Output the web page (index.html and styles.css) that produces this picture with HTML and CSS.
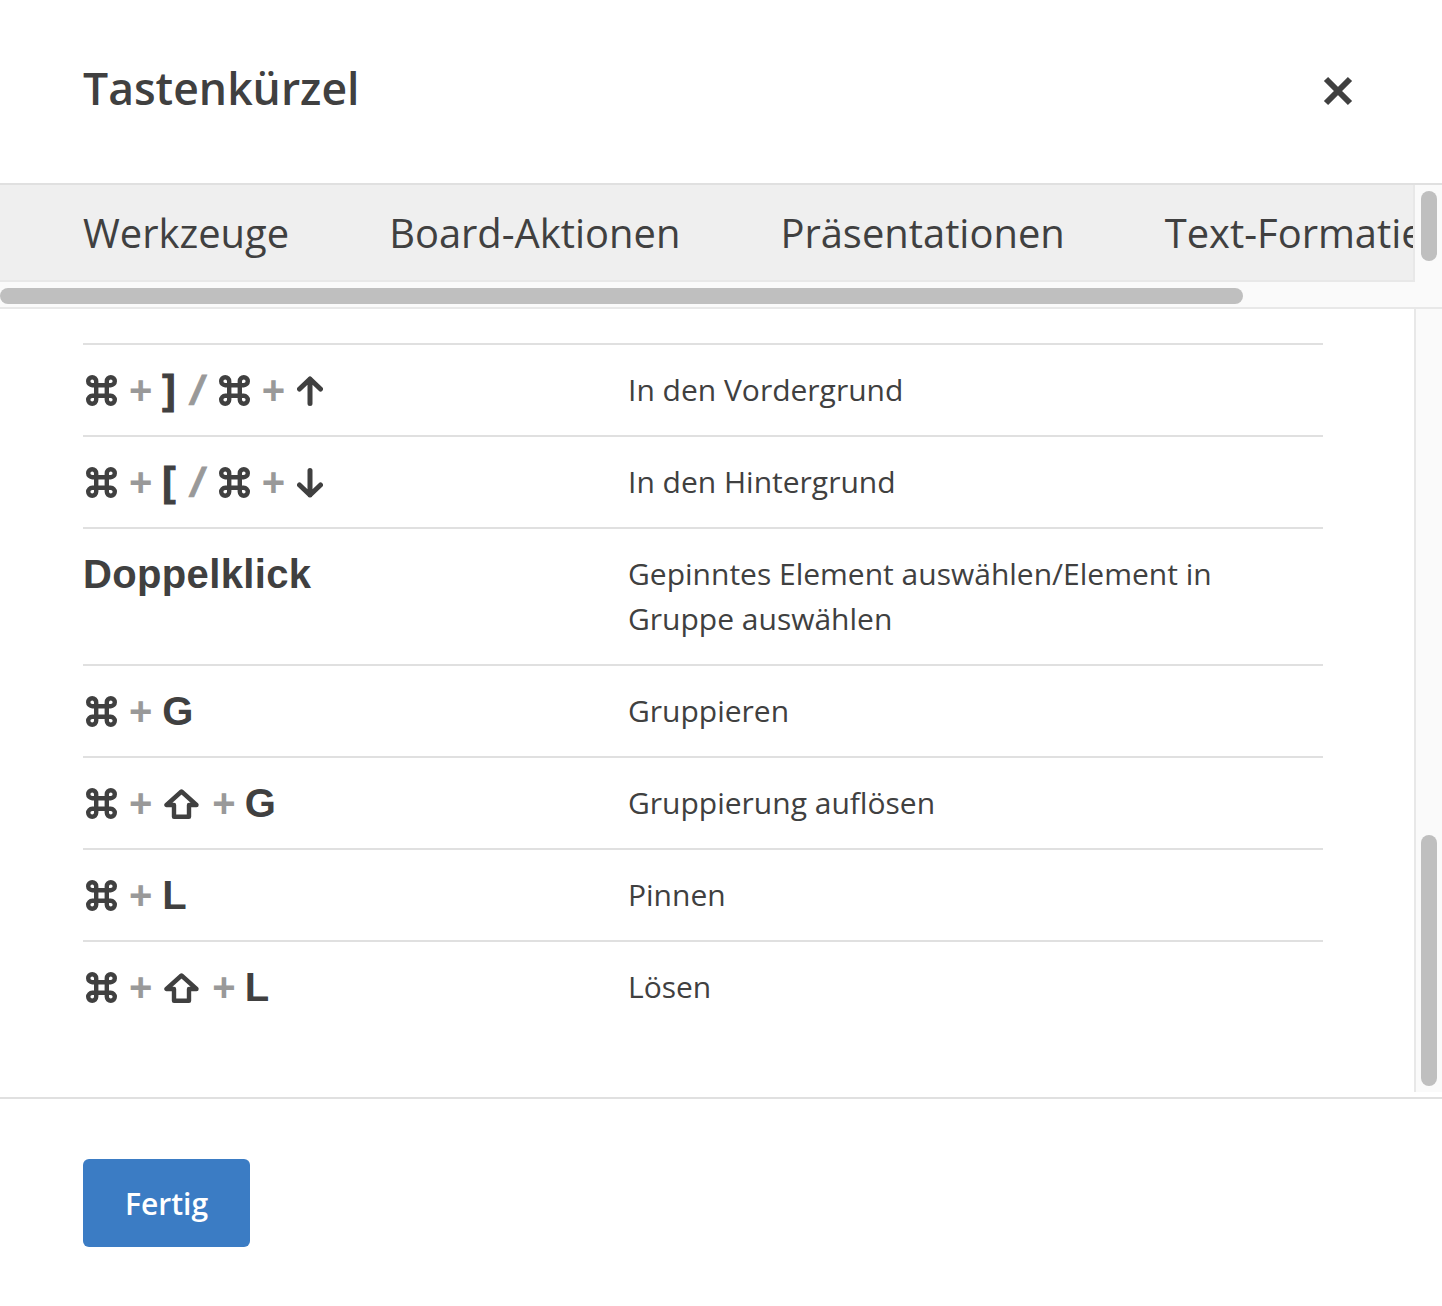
FILE: index.html
```html
<!DOCTYPE html>
<html lang="de">
<head>
    <meta charset="UTF-8">
    <title>Tastenkürzel</title>
    <link rel="stylesheet" href="styles.css">
</head>
<body>
    <svg class="defs" width="0" height="0">
        <symbol id="cmd" viewBox="0 0 31 31">
            <path d="M10.200 10.200V6.200a4 4 0 1 0-4 4H24.800a4 4 0 1 0-4-4V24.800a4 4 0 1 0 4-4H6.200a4 4 0 1 0 4 4Z" fill="none" stroke="currentColor" stroke-width="4.400"/>
        </symbol>
        <symbol id="up" viewBox="0 0 26 30">
            <path d="M13 27.500V3M2.500 13 13 3l10.500 10" fill="none" stroke="currentColor" stroke-width="5" stroke-linecap="round" stroke-linejoin="round"/>
        </symbol>
        <symbol id="down" viewBox="0 0 26 30">
            <path d="M13 2.500V27M2.500 17 13 27l10.500-10" fill="none" stroke="currentColor" stroke-width="5" stroke-linecap="round" stroke-linejoin="round"/>
        </symbol>
        <symbol id="shift" viewBox="0 0 35 30">
            <path d="M17.500 2.500 2.500 16H10V27.800H25V16H32.500Z" fill="none" stroke="currentColor" stroke-width="4.400" stroke-linejoin="round"/>
        </symbol>
    </svg>

    <div class="dialog">
        <header class="dialog-header">
            <h1 class="dialog-title">Tastenkürzel</h1>
            <svg class="close-icon" viewBox="0 0 30 30"><path d="M3 3 27 27M27 3 3 27" stroke="currentColor" stroke-width="6"/></svg>
        </header>

        <div class="tabs-wrap">
            <div class="tabs-scroll">
                <nav class="tabs">
                    <span class="tab">Werkzeuge</span>
                    <span class="tab">Board-Aktionen</span>
                    <span class="tab">Präsentationen</span>
                    <span class="tab">Text-Formatierung</span>
                </nav>
                <div class="hbar"><div class="hbar-thumb"></div></div>
            </div>
            <div class="vbar vbar-tabs"><div class="vbar-thumb"></div></div>
        </div>

        <div class="dialog-body">
            <div class="shortcuts">
                <div class="row">
                    <div class="keys">
                        <svg class="ic-cmd"><use href="#cmd"/></svg><span class="sep">+</span><span class="key bracket">]</span><span class="sep slash">/</span><svg class="ic-cmd"><use href="#cmd"/></svg><span class="sep">+</span><svg class="ic-arrow"><use href="#up"/></svg>
                    </div>
                    <div class="desc">In den Vordergrund</div>
                </div>
                <div class="row">
                    <div class="keys">
                        <svg class="ic-cmd"><use href="#cmd"/></svg><span class="sep">+</span><span class="key bracket">[</span><span class="sep slash">/</span><svg class="ic-cmd"><use href="#cmd"/></svg><span class="sep">+</span><svg class="ic-arrow"><use href="#down"/></svg>
                    </div>
                    <div class="desc">In den Hintergrund</div>
                </div>
                <div class="row">
                    <div class="keys"><span class="key-word">Doppelklick</span></div>
                    <div class="desc">Gepinntes Element auswählen/Element in Gruppe auswählen</div>
                </div>
                <div class="row">
                    <div class="keys">
                        <svg class="ic-cmd"><use href="#cmd"/></svg><span class="sep">+</span><span class="key">G</span>
                    </div>
                    <div class="desc">Gruppieren</div>
                </div>
                <div class="row">
                    <div class="keys">
                        <svg class="ic-cmd"><use href="#cmd"/></svg><span class="sep">+</span><svg class="ic-shift"><use href="#shift"/></svg><span class="sep">+</span><span class="key">G</span>
                    </div>
                    <div class="desc">Gruppierung auflösen</div>
                </div>
                <div class="row">
                    <div class="keys">
                        <svg class="ic-cmd"><use href="#cmd"/></svg><span class="sep">+</span><span class="key">L</span>
                    </div>
                    <div class="desc">Pinnen</div>
                </div>
                <div class="row">
                    <div class="keys">
                        <svg class="ic-cmd"><use href="#cmd"/></svg><span class="sep">+</span><svg class="ic-shift"><use href="#shift"/></svg><span class="sep">+</span><span class="key">L</span>
                    </div>
                    <div class="desc">Lösen</div>
                </div>
            </div>
            <div class="vbar vbar-body"><div class="vbar-thumb"></div></div>
        </div>

        <footer class="dialog-footer">
            <button class="btn-done">Fertig</button>
        </footer>
    </div>
</body>
</html>
```

FILE: styles.css
```css
body {
    margin: 0;
    height: 1306px;
    overflow: hidden;
    background-color: #fff;
    color: #404040;
    font-family: "Open Sans", sans-serif;
}
.defs {
    position: absolute;
}
.dialog {
    display: flex;
    flex-direction: column;
    height: 1306px;
}
.dialog-header {
    display: flex;
    justify-content: space-between;
    align-items: flex-start;
    height: 183px;
    padding: 0 89px 0 83px;
    box-sizing: border-box;
}
.dialog-title {
    margin: 58px 0 0;
    font-size: 44.500px;
    line-height: 60px;
    font-weight: 600;
}
.close-icon {
    width: 30px;
    height: 30px;
    margin-top: 76px;
}
.tabs-wrap {
    display: flex;
    height: 126px;
    box-sizing: border-box;
    border-top: 2px solid #e0e0e0;
    border-bottom: 2px solid #e8e8e8;
    background-color: #fafafa;
}
.tabs-scroll {
    width: 1415px;
    flex: none;
    overflow: hidden;
}
.tabs {
    display: flex;
    gap: 100px;
    height: 97px;
    padding-left: 83px;
    padding-bottom: 1px;
    box-sizing: border-box;
    align-items: center;
    white-space: nowrap;
    background-color: #efefef;
    border-bottom: 2px solid #e8e8e8;
    border-right: 2px solid #e8e8e8;
    overflow: hidden;
    font-size: 39.900px;
}
.hbar {
    padding-top: 6px;
}
.hbar-thumb {
    width: 1243px;
    height: 16px;
    border-radius: 8px;
    background-color: #bfbfbf;
}
.vbar {
    flex: none;
    width: 16px;
    padding: 0 5px 0 6px;
    box-sizing: content-box;
}
.vbar-thumb {
    width: 16px;
    border-radius: 8px;
    background-color: #bfbfbf;
}
.vbar-tabs .vbar-thumb {
    height: 70px;
    margin-top: 6px;
}
.dialog-body {
    display: flex;
    height: 783px;
}
.shortcuts {
    width: 1240px;
    padding: 34px 91px 0 83px;
    flex: none;
}
.vbar-body {
    background-color: #fafafa;
    border-left: 2px solid #e8e8e8;
    padding-left: 5px;
}
.vbar-body .vbar-thumb {
    height: 251px;
    margin-top: 526px;
}
.row {
    display: flex;
    border-top: 2px solid #e0e0e0;
    padding: 22px 0 23px;
    font-size: 30px;
    line-height: 45px;
}
.keys {
    display: flex;
    align-items: center;
    align-self: flex-start;
    height: 45px;
    width: 545px;
    margin: 1px 0 -1px;
    flex: none;
    font-family: "Liberation Sans", Arial, sans-serif;
    font-weight: 700;
    font-size: 40px;
}
.key {
    margin-left: -2px;
    line-height: 45px;
}
.bracket {
    -webkit-text-stroke: 1px #404040;
}
.key-word {
    letter-spacing: 0.350px;
    line-height: 45px;
}
.sep {
    color: #999;
    margin: 0 12px;
    line-height: 45px;
}
.slash {
    margin: 0 16px;
    transform: skewX(-14deg);
    -webkit-text-stroke: 1px #999;
}
.ic-cmd {
    width: 31px;
    height: 31px;
}
.ic-cmd:first-child {
    margin-left: 3px;
}
.ic-arrow {
    width: 26px;
    height: 30px;
}
.ic-shift {
    width: 35px;
    height: 30px;
}
.ic-shift + .sep {
    margin: 0 11px 0 13px;
}
.desc {
    flex: 1;
}
.dialog-footer {
    margin-top: 5px;
    border-top: 2px solid #e0e0e0;
    padding: 60px 83px 0;
}
.btn-done {
    width: 167px;
    height: 88px;
    border: 0;
    border-radius: 6px;
    background-color: #3b7cc4;
    color: #fff;
    font-family: "Open Sans", sans-serif;
    font-size: 30px;
    font-weight: 600;
}
```
